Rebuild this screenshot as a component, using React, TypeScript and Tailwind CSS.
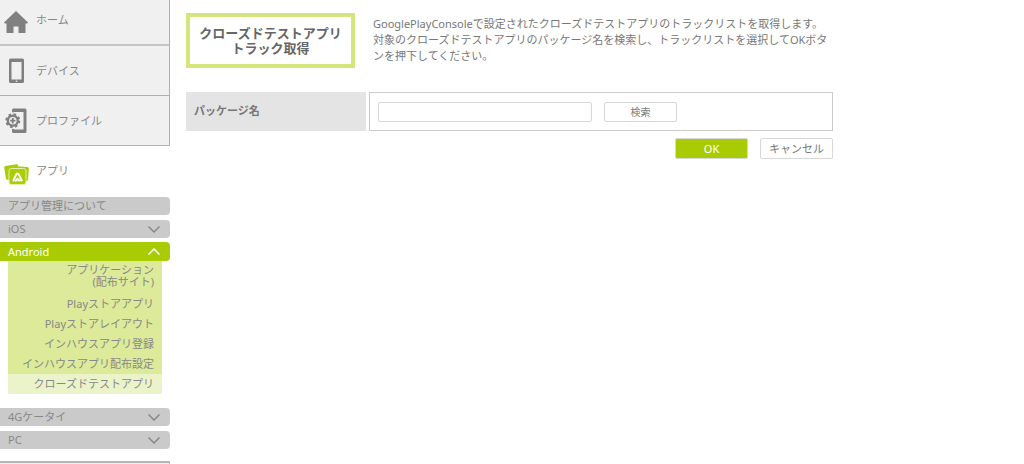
import React, { useState } from 'react';

const topMenu = [
  { label: 'デバイス', icon: 'device' },
  { label: 'プロファイル', icon: 'profile' }
];

const androidMenu = [
  'Playストアアプリ',
  'Playストアレイアウト',
  'インハウスアプリ登録',
  'インハウスアプリ配布設定',
  'クローズドテストアプリ'
];

const HomeIcon = () => (
  <svg viewBox="0 0 24 22" className="w-6 h-[22px]" fill="#808080" aria-hidden="true">
    <path d="M12 0 24 11.500 23 12.500H21.500V22H14.500V15.500H9.500V22H2.500V12.500H1L0 11.500Z" />
  </svg>
);

const DeviceIcon = () => (
  <svg viewBox="0 0 24 26" className="w-6 h-[26px]" aria-hidden="true">
    <path
      fill="#808080"
      fillRule="evenodd"
      d="M6.500 .5h12a1.500 1.500 0 0 1 1.500 1.500v21.500a1.500 1.500 0 0 1-1.500 1.500H6.500a1.500 1.500 0 0 1-1.500-1.500V2a1.500 1.500 0 0 1 1.500-1.500ZM7.500 4v17.500h10V4Z"
    />
    <circle cx="12.500" cy="23.200" r=".8" fill="#f0f0f0" />
  </svg>
);

const ProfileIcon = () => (
  <svg viewBox="0 0 24 26" className="w-6 h-[26px]" aria-hidden="true">
    <path
      fill="#808080"
      fillRule="evenodd"
      d="M9.500 .5h11.500a1.500 1.500 0 0 1 1.500 1.500v21.500a1.500 1.500 0 0 1-1.500 1.500H9.500A1.500 1.500 0 0 1 8 23.500V2A1.500 1.500 0 0 1 9.500 .5ZM10 4v17.500h9.500V4Z"
    />
    <circle cx="8.800" cy="12.700" r="8.400" fill="#f0f0f0" />
    <circle cx="8.800" cy="12.700" r="6.500" fill="none" stroke="#808080" strokeWidth="2" strokeDasharray="2.600 2.505" />
    <circle cx="8.800" cy="12.700" r="5" fill="none" stroke="#808080" strokeWidth="2.400" />
    <path d="M8.800 10v5.400M6.100 12.700h5.400" stroke="#808080" strokeWidth="1.800" />
  </svg>
);

const AppIcon = () => (
  <svg viewBox="0 0 26 22" className="w-[26px] h-[22px]" aria-hidden="true">
    <rect x="1" y="2" width="14" height="14" rx="1.500" fill="#aacd06" transform="rotate(-9 8 9)" />
    <rect x="11" y="3.500" width="13.500" height="14" rx="1.500" fill="#aacd06" transform="rotate(4 17 10)" />
    <rect x="5" y="5.500" width="17" height="16" rx="2.500" fill="#aacd06" stroke="#e4f0b0" />
    <path
      d="M9 18.200 12.300 11.400Q13.500 9.600 14.700 11.400L18 18.200M11.200 18.400 13.500 15.800 15.800 18.400"
      fill="none"
      stroke="#fff"
      strokeWidth="2"
      strokeLinejoin="round"
    />
  </svg>
);

const Chevron: React.FC<{ up?: boolean }> = ({ up }) => (
  <svg viewBox="0 0 12 7" className="w-3 h-[7px]" fill="none" stroke="currentColor" strokeWidth="1.500" aria-hidden="true">
    <path d={up ? 'M.5 6.500 6 1l5.500 5.500' : 'M.5.500 6 6 11.500.5'} />
  </svg>
);

const SubBar: React.FC<{ label: string; open?: boolean; expandable?: boolean }> = ({ label, open, expandable = true }) => (
  <button
    type="button"
    aria-expanded={expandable ? !!open : undefined}
    className={`flex w-full items-center justify-between pl-2 pr-2.5 rounded-r ${
      open ? 'h-[19px] bg-[#a9cb04] text-white' : 'h-[18px] bg-[#cacaca] text-[#888]'
    }`}
  >
    <span>{label}</span>
    {expandable && <Chevron up={open} />}
  </button>
);

const Sidebar = () => (
  <nav className="w-[170px] shrink-0 text-[11px] leading-3 text-[#888]">
    <a href="#home" className="flex items-center gap-2 h-[46px] pl-1 bg-[#f0f0f0] border-b-2 border-r border-r-[#b0b0b0] border-b-[#c4c4c4]">
      <HomeIcon />
      <span className="pb-1">ホーム</span>
    </a>
    {topMenu.map(item => (
      <a
        key={item.icon}
        href={`#${item.icon}`}
        className="flex items-center gap-2 h-[50px] pl-1 bg-[#f0f0f0] border-b border-r border-[#b0b0b0]"
      >
        {item.icon === 'device' ? <DeviceIcon /> : <ProfileIcon />}
        <span>{item.label}</span>
      </a>
    ))}
    <a href="#apps" className="flex items-start gap-1.5 h-[51px] pl-1 pt-[17px]">
      <AppIcon />
      <span className="pt-0.5">アプリ</span>
    </a>

    <div className="flex flex-col gap-[5px]">
      <SubBar label="アプリ管理について" expandable={false} />
      <SubBar label="iOS" />
    </div>
    <div className="pt-1">
      <SubBar label="Android" open />
      <ul className="mx-2 bg-[#dcea99] text-right">
        <li>
          <a href="#distribution" className="block h-[33px] pr-2 pt-[3px]">
            アプリケーション<br />(配布サイト)
          </a>
        </li>
        {androidMenu.map(label => (
          <li key={label}>
            <a
              href="#android"
              className={`block pr-2 leading-5 ${label === 'クローズドテストアプリ' ? 'bg-[#ebf3cb]' : ''}`}
            >
              {label}
            </a>
          </li>
        ))}
      </ul>
    </div>
    <div className="flex flex-col gap-[5px] pt-3.5">
      <SubBar label="4Gケータイ" />
      <SubBar label="PC" />
    </div>
    <div className="h-[3px] mt-3 bg-[#f0f0f0] border-t-2 border-r border-[#b5b5b5]"></div>
  </nav>
);

export default function App() {
  const [packageName, setPackageName] = useState('');

  return (
    <div className="flex gap-4 bg-white font-['Noto_Sans','Noto_Sans_CJK_JP',sans-serif] text-[#777]">
      <Sidebar />
      <main className="flex-1 min-w-0 max-w-[647px] pt-[13px] text-[11px]">
        <header className="flex items-start gap-[18px]">
          <h1 className="flex w-[169px] h-[55px] shrink-0 items-center justify-center border-4 border-[#d4e57c] text-center text-[13px] leading-[15px] font-bold text-[#666]">
            クローズドテストアプリ<br />トラック取得
          </h1>
          <p className="pt-[3px] leading-4 whitespace-nowrap">
            GooglePlayConsoleで設定されたクローズドテストアプリのトラックリストを取得します。<br />
            対象のクローズドテストアプリのパッケージ名を検索し、トラックリストを選択してOKボタ<br />
            ンを押下してください。
          </p>
        </header>

        <form onSubmit={e => e.preventDefault()} className="pt-6">
          <div className="flex gap-[3px] h-[39px]">
            <label htmlFor="package" className="flex w-[180px] shrink-0 items-center pl-2 bg-[#e4e4e4] font-bold">
              パッケージ名
            </label>
            <div className="flex flex-1 items-center gap-3 px-2 border border-[#ccc]">
              <input
                id="package"
                type="text"
                value={packageName}
                onChange={e => setPackageName(e.target.value)}
                className="w-[214px] h-5 px-1 border border-[#d8d8d8] rounded-xs"
              />
              <button type="button" className="w-[73px] h-5 border border-[#d8d8d8] rounded-xs text-[10px] leading-4">
                検索
              </button>
            </div>
          </div>
          <div className="flex justify-end gap-3 pt-[7px]">
            <button type="submit" className="w-[73px] h-[21px] border border-[#d8d8d8] rounded-xs bg-[#a9cb04] leading-4 text-white">
              OK
            </button>
            <button type="button" className="w-[73px] h-[21px] border border-[#d8d8d8] rounded-xs leading-4">
              キャンセル
            </button>
          </div>
        </form>
      </main>
    </div>
  );
}
